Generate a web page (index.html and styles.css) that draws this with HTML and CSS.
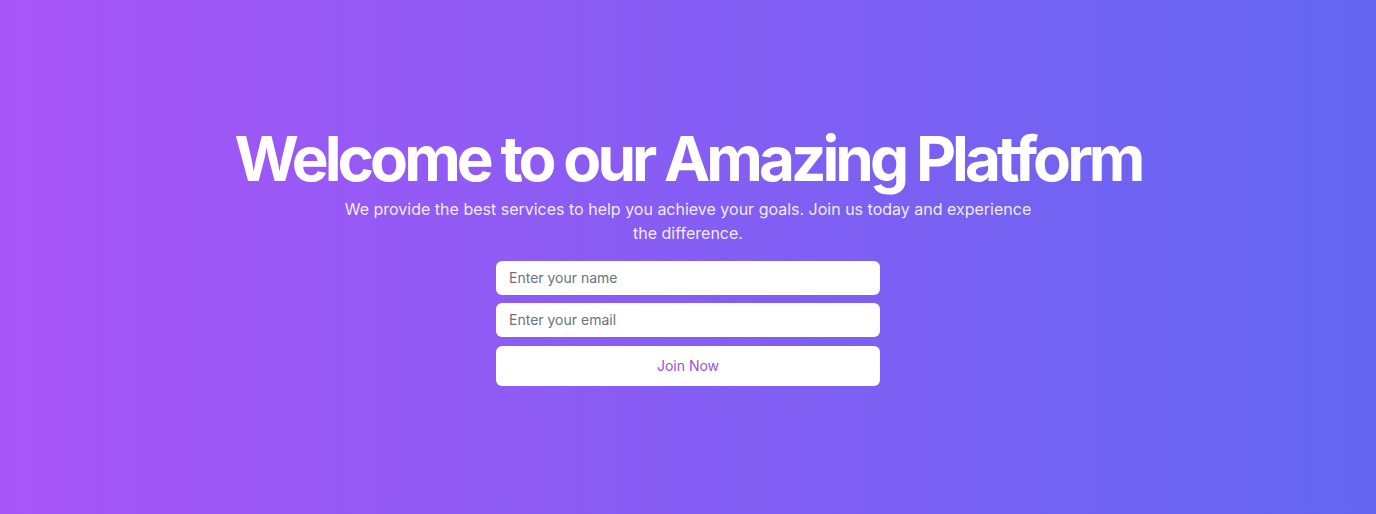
FILE: index.html
```html
<!DOCTYPE html>
<html lang="en">
<head>
<meta charset="utf-8">
<title>Welcome</title>
<link rel="stylesheet" href="styles.css">
</head>
<body>
<main class="hero">
  <div class="content">
    <h1 class="title">Welcome to our Amazing Platform</h1>
    <p class="subtitle">We provide the best services to help you achieve your goals. Join us today and experience the difference.</p>
    <form class="form">
      <input class="field" type="text" placeholder="Enter your name">
      <input class="field" type="email" placeholder="Enter your email">
      <button class="btn" type="button">Join Now</button>
    </form>
  </div>
</main>
</body>
</html>
```
FILE: styles.css
```css
* { box-sizing: border-box; }
html, body { margin: 0; padding: 0; }
body {
  font-family: Inter, "Noto Sans", sans-serif;
}
.hero {
  min-height: 514px;
  background: linear-gradient(to right, #a855f7, #6366f1);
  display: flex;
  align-items: center;
  justify-content: center;
}
.content {
  display: flex;
  flex-direction: column;
  align-items: center;
  text-align: center;
}
.title {
  margin: 0;
  font-size: 62px;
  line-height: 60px;
  font-weight: 700;
  letter-spacing: -0.064em;
  color: #fff;
}
.subtitle {
  margin: 8px 0 0;
  max-width: 700px;
  font-size: 16px;
  line-height: 24px;
  color: rgba(255,255,255,0.9);
}
.form {
  margin-top: 16px;
  width: 384px;
  display: flex;
  flex-direction: column;
  gap: 8px;
}
.field {
  height: 34px;
  border: none;
  border-radius: 6px;
  padding: 0 13px;
  font-family: inherit;
  font-size: 14px;
  color: #111;
  background: #fff;
  outline: none;
}
.field::placeholder { color: #6b7280; }
.btn {
  margin-top: 1px;
  height: 40px;
  border: none;
  border-radius: 6px;
  background: #fff;
  color: #9d4fe3;
  font-family: inherit;
  font-size: 14px;
  cursor: pointer;
}
```
